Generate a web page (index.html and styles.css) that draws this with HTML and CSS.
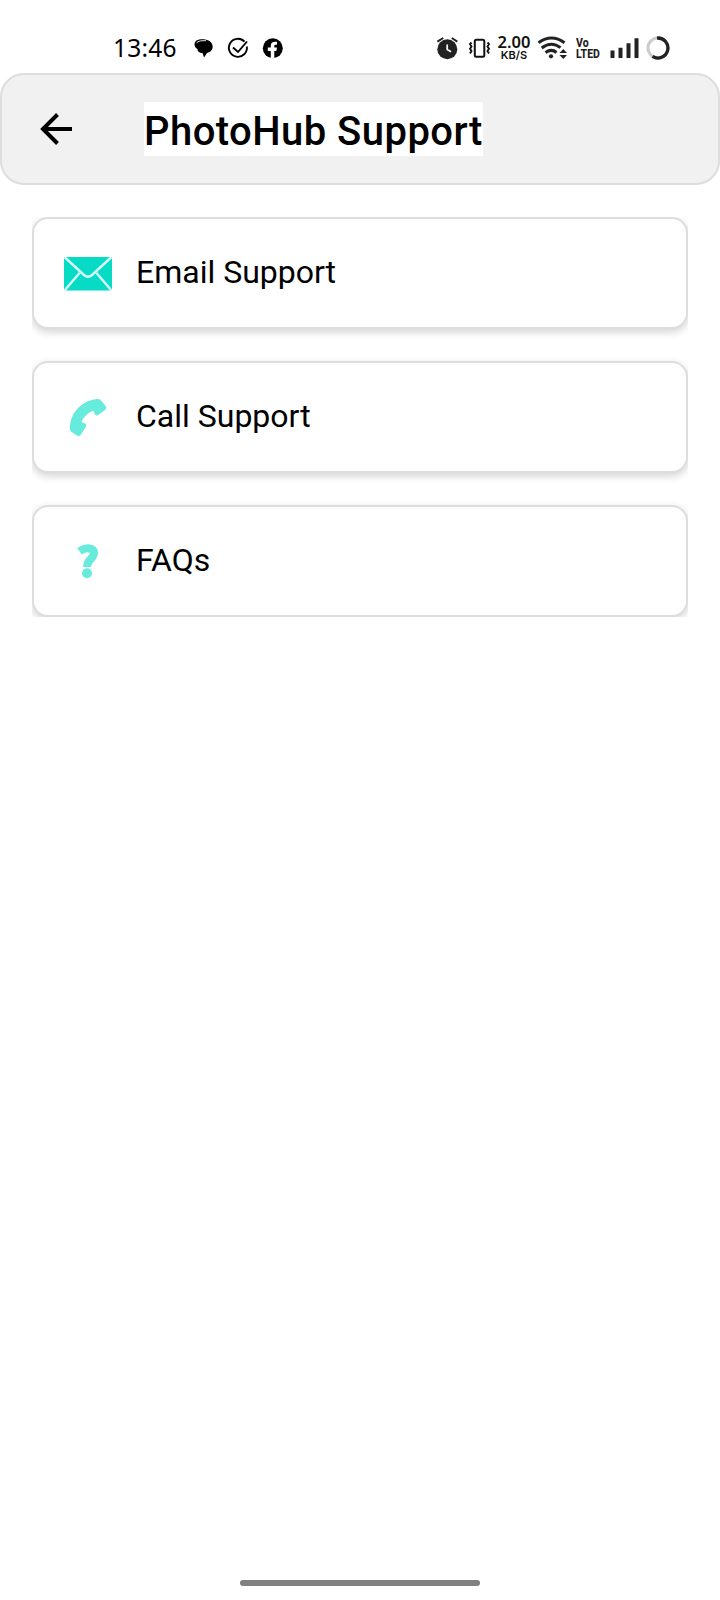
FILE: index.html
```html
<!DOCTYPE html>
<html lang="en">
<head>
<meta charset="utf-8">
<title>PhotoHub Support</title>
<link rel="stylesheet" href="styles.css">
</head>
<body>
<div class="screen">
  <div class="status">
    <span class="clock">13:46</span>
    <svg class="notes" width="92" height="24" viewBox="193 36 92 24">
      <path d="M196.500 40.500C200 38.500 206 39 209.500 41C215 45 213 52 207 53L204 57.500L202.500 53C199 53 197.500 51 197.500 49C194 47 193.500 43 196.500 40.500Z"/>
      <path d="M196.500 43C198 40.800 202 40.500 206 40.700" fill="none" stroke="#fff" stroke-width="0.900"/>
      <path d="M244.500 41.700A9 9 0 1 0 246.800 46.500M233 47.500L238 52L247 41.500" fill="none" stroke="#000" stroke-width="1.900"/>
      <circle cx="272.800" cy="48.200" r="10"/>
      <path d="M270.800 58V51H267.800V47.500H270.800V45.500C270.800 42.500 272.500 41.300 277 41.700V44.700C274.800 44.600 274.300 45 274.300 46.200V47.500H277L276.400 51H274.300V58Z" fill="#fff"/>
    </svg>
    <svg class="alarm" width="56" height="26" viewBox="435 35 56 26">
      <g fill="none" stroke="#222">
        <path d="M437.300 41.700L443.300 38M451.800 38L457.300 41.700" stroke-width="2"/>
        <circle cx="447.300" cy="49.300" r="10" fill="#222" stroke="none"/>
        <path d="M447.200 44.500V49.500L451 51.700" stroke="#fff" stroke-width="1.700"/>
        <rect x="474.800" y="39.700" width="9.500" height="17" rx="1.500" stroke="#111" stroke-width="2"/>
        <path d="M471.500 42.500L470 44.200L471.500 46.500L470 48.700L471.500 51L470 53.500M487.500 42.500L489 44.200L487.500 46.500L489 48.700L487.500 51L489 53.500" stroke="#111" stroke-width="1.900"/>
      </g>
    </svg>
    <span class="rate"><b>2.00</b><small>KB/S</small></span>
    <svg class="wifi" width="30" height="26" viewBox="537 35 30 26">
      <g fill="none" stroke="#222" stroke-width="3">
        <path d="M538.500 42.700Q551.500 33.200 564.500 42.700M541.700 48Q551.500 40.500 560.500 47.700M545.500 52.500Q551.500 48.300 556.500 52.500"/>
      </g>
      <circle cx="551" cy="56.300" r="2.100" fill="#222"/>
      <path d="M559.500 53L563.300 49L567 53ZM559.500 55L563.300 59L567 55Z" fill="#222"/>
    </svg>
    <span class="volte"><span>Vo</span><span>LTED</span></span>
    <svg class="signal" width="62" height="26" viewBox="609 35 62 26">
      <path d="M610.500 50.500h4v7.500h-4zM618.500 47.700h4v10.300h-4zM626.500 43.300h4v14.700h-4zM634.500 38.300h4v19.700h-4z" fill="#222"/>
      <circle cx="658" cy="48" r="10" fill="none" stroke="#ccc" stroke-width="3"/>
      <path d="M657 38.050A10 10 0 1 1 652.500 56.400" fill="none" stroke="#222" stroke-width="3.300"/>
    </svg>
  </div>
  <header class="header">
    <svg class="back" width="32" height="32" viewBox="0 0 32 32"><path d="M32 16H3M17.500 1.500L3 16L17.500 30.500" fill="none" stroke="#000" stroke-width="4"/></svg>
    <h1 class="title">PhotoHub Support</h1>
  </header>
  <main class="list">
    <div class="card">
      <svg class="icon" width="48" height="48" viewBox="64 249 48 48">
        <rect x="64" y="257" width="48" height="33.500" rx="2" fill="#05dbc5"/>
        <path d="M65 257.500L84 275Q88 278.500 92 275L111 257.500M65 290L79.500 273M111 290L96.500 273" fill="none" stroke="#d8fffa" stroke-width="2.400"/>
      </svg>
      <span class="label">Email Support</span>
    </div>
    <div class="card">
      <svg class="icon" width="48" height="48" viewBox="64 393 48 48">
        <path d="M70 429C69.500 413 82 400 98 399Q100 399 101.500 401L106 406.500Q107 408.500 105 410L98 415Q96.500 416 95.500 415L93 410.500Q84 415 81.500 422L85 423.500Q87 424.500 86 426.500L81 434.500Q79.500 437 77 435.500L71.500 432Q70 431 70 429Z" fill="#66ebdd"/>
      </svg>
      <span class="label">Call Support</span>
    </div>
    <div class="card">
      <svg class="icon" width="48" height="48" viewBox="64 537 48 48">
        <path d="M79.500 551.300C86 546.800 94 547.500 94 553C94 559 87 559 87 567" fill="none" stroke="#66ebdd" stroke-width="8"/>
        <circle cx="87" cy="573.300" r="5" fill="#66ebdd"/>
      </svg>
      <span class="label">FAQs</span>
    </div>
  </main>
  <div class="home"></div>
</div>
</body>
</html>
```
FILE: styles.css
```css
* { box-sizing: border-box; }
body { margin: 0; background: #fff; color: #000; font-family: Roboto, sans-serif; }
.screen { height: 1600px; display: flex; flex-direction: column; }
.status { height: 73px; padding: 23px 49px 0 113px; display: flex; align-items: center; }
.clock { width: 65px; font: 24.500px/28px "Noto Sans", sans-serif; letter-spacing: 0.200px; white-space: nowrap; }
.notes { margin-left: 15px; }
.alarm { margin-left: 150px; }
.rate { width: 36px; margin-left: 5px; display: flex; flex-direction: column; align-items: center; white-space: nowrap; color: #111; }
.rate b { font: 600 16.500px/14px "Noto Sans", sans-serif; }
.rate small { font: 600 11px/12px Inter, sans-serif; }
.wifi { margin-left: 5px; }
.volte { width: 26px; margin-left: 9px; display: flex; flex-direction: column; font: 800 10.500px/8.500px Roboto, sans-serif; color: #222; transform: scaleY(1.200); }
.signal { margin-left: 7px; }
.status > * { flex-shrink: 0; }
.header { height: 112px; flex-shrink: 0; border: 2px solid #ddd; border-radius: 24px; background: #f1f1f1; display: flex; align-items: center; padding-left: 38px; }
.title { width: 339px; height: 54px; margin: 0 0 0 72px; padding-top: 2px; background: #fff; font-size: 40px; font-weight: 500; line-height: 56px; letter-spacing: 0.450px; white-space: nowrap; }
.list { margin: 32px 32px 0; display: flex; flex-direction: column; gap: 32px; overflow: hidden; }
.card { height: 112px; flex-shrink: 0; border: 2px solid #ddd; border-radius: 16px; background: #fff; box-shadow: 0 3px 8px rgba(0, 0, 0, 0.180); display: flex; align-items: center; padding-left: 30px; }
.label { margin-left: 24px; padding-bottom: 2px; font-size: 32px; line-height: 38px; }
.home { width: 240px; height: 6px; margin: auto auto 14px; border-radius: 3px; background: #808080; }
```
